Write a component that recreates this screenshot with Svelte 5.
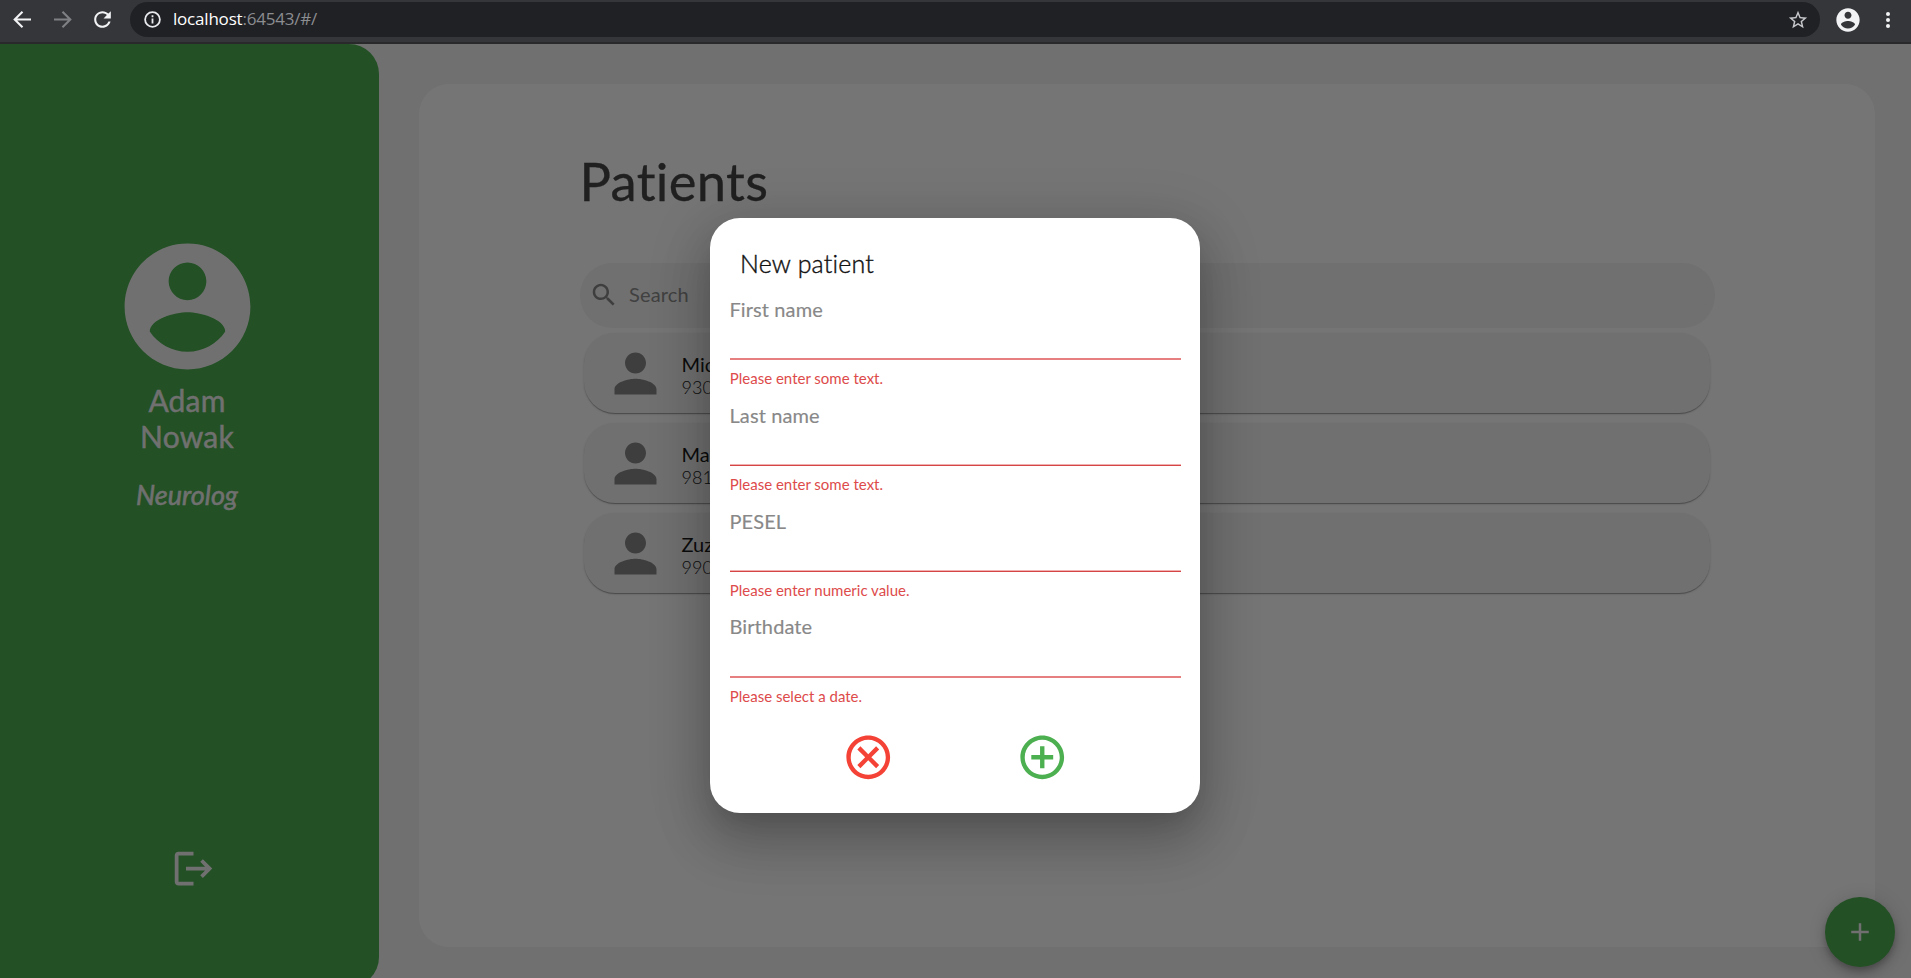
<script>
  const patients = [
    { name: 'Mic', id: '930' },
    { name: 'Ma', id: '981' },
    { name: 'Zuz', id: '990' },
  ];
  const fields = [
    { label: 'First name', error: 'Please enter some text.' },
    { label: 'Last name', error: 'Please enter some text.' },
    { label: 'PESEL', error: 'Please enter numeric value.' },
    { label: 'Birthdate', error: 'Please select a date.' },
  ];
  const account =
    'M12 2C6.48 2 2 6.48 2 12s4.48 10 10 10 10-4.48 10-10S17.52 2 12 2zm0 3c1.66 0 3 1.34 3 3s-1.34 3-3 3-3-1.34-3-3 1.34-3 3-3zm0 14.2c-2.5 0-4.71-1.28-6-3.22.03-1.99 4-3.08 6-3.08 1.99 0 5.97 1.09 6 3.08-1.29 1.94-3.5 3.22-6 3.22z';
</script>

{#snippet icon(d, size)}
  <svg class="icon" width={size} height={size} viewBox="0 0 24 24"><path {d} /></svg>
{/snippet}

<div class="window">
  <header class="toolbar">
    <nav class="nav">
      <svg width="25" height="25" viewBox="0 0 25 25"><path d="M21 12.5H5M12.5 4.7 4.7 12.5l7.8 7.8" /></svg>
      <svg class="off" width="25" height="25" viewBox="0 0 25 25"><path d="M4 12.5h16M12.5 4.7l7.8 7.8-7.8 7.8" /></svg>
      {@render icon('M17.65 6.35C16.2 4.9 14.21 4 12 4c-4.42 0-7.99 3.58-7.99 8s3.57 8 7.99 8c3.73 0 6.84-2.55 7.73-6h-2.08c-.82 2.33-3.04 4-5.65 4-3.31 0-6-2.69-6-6s2.69-6 6-6c1.66 0 3.14.69 4.22 1.78L13 11h7V4l-2.35 2.35z', 25)}
    </nav>
    <div class="omnibox">
      <svg class="info" width="17" height="17" viewBox="0 0 17 17">
        <circle cx="8.5" cy="8.5" r="7.4" /><path d="M8.5 7.6v4.9M8.5 4.3v2" />
      </svg>
      <span class="url"><span class="host">localhost</span>:64543/#/</span>
      <span class="star">
        {@render icon('M22 9.24l-7.19-.62L12 2 9.19 8.63 2 9.24l5.46 4.73L5.82 21 12 17.27 18.18 21l-1.63-7.03L22 9.24zM12 15.4l-3.76 2.27 1-4.28-3.32-2.88 4.38-.38L12 6.1l1.71 4.04 4.38.38-3.32 2.88 1 4.28L12 15.4z', 22)}
      </span>
    </div>
    <div class="user">{@render icon(account, 28)}</div>
    <div class="dots"><i></i><i></i><i></i></div>
  </header>

  <div class="page">
    <aside class="sidebar">
      <div class="avatar">{@render icon(account, 151)}</div>
      <div class="who">Adam<br />Nowak</div>
      <div class="role">Neurolog</div>
      <div class="logout">
        {@render icon('M17 7l-1.41 1.41L18.17 11H8v2h10.17l-2.58 2.58L17 17l5-5zM4 5h8V3H4c-1.1 0-2 .9-2 2v14c0 1.1.9 2 2 2h8v-2H4V5z', 45)}
      </div>
    </aside>
    <main class="card">
      <h1>Patients</h1>
      <div class="search">
        {@render icon('M15.5 14h-.79l-.28-.27C15.41 12.59 16 11.11 16 9.5 16 5.91 13.09 3 9.5 3S3 5.91 3 9.5 5.91 16 9.5 16c1.61 0 3.09-.59 4.23-1.57l.27.28v.79l5 4.99L20.49 19l-4.99-5zm-6 0C7.01 14 5 11.99 5 9.5S7.01 5 9.5 5 14 7.01 14 9.5 11.99 14 9.5 14z', 30)}
        <span>Search</span>
      </div>
      <ul>
        {#each patients as p}
          <li>
            {@render icon('M12 12c2.21 0 4-1.79 4-4s-1.79-4-4-4-4 1.79-4 4 1.79 4 4 4zm0 2c-2.67 0-8 1.34-8 4v2h16v-2c0-2.66-5.33-4-8-4z', 63)}
            <div class="info-text">
              <div class="name">{p.name}</div>
              <div class="id">{p.id}</div>
            </div>
          </li>
        {/each}
      </ul>
    </main>
    <button class="fab" aria-label="Add">{@render icon('M19 13h-6v6h-2v-6H5v-2h6V5h2v6h6v2z', 30)}</button>
    <div class="overlay">
      <section class="dialog">
        <h2>New patient</h2>
        {#each fields as f, i}
          <div class="field">
            <div class="label">{f.label}</div>
            <div class="rule" class:crisp={i === 1 || i === 2}></div>
            <div class="error">{f.error}</div>
          </div>
        {/each}
        <div class="actions">
          <span class="cancel">{@render icon('M15.59 7L12 10.59 8.41 7 7 8.41 10.59 12 7 15.59 8.41 17 12 13.41 15.59 17 17 15.59 13.41 12 17 8.41 15.59 7zM12 2C6.47 2 2 6.47 2 12s4.47 10 10 10 10-4.47 10-10S17.53 2 12 2zm0 18c-4.41 0-8-3.59-8-8s3.59-8 8-8 8 3.59 8 8-3.59 8-8 8z', 52.5)}</span>
          <span class="confirm">{@render icon('M13 7h-2v4H7v2h4v4h2v-4h4v-2h-4V7zm-1-5C6.48 2 2 6.48 2 12s4.48 10 10 10 10-4.48 10-10S17.52 2 12 2zm0 18c-4.41 0-8-3.59-8-8s3.59-8 8-8 8 3.59 8 8-3.59 8-8 8z', 52.5)}</span>
        </div>
      </section>
    </div>
  </div>
</div>

<style>
  :global(body) { margin: 0; overflow: hidden; }
  .window {
    width: 1911px; height: 978px; overflow: hidden;
    display: flex; flex-direction: column;
    font-family: Lato, sans-serif; line-height: 1.2;
    font-variant-ligatures: none;
  }
  .icon { display: block; flex: none; fill: currentColor; }
  .toolbar {
    box-sizing: border-box; height: 44px; flex: none;
    display: flex; align-items: flex-start;
    padding: 2px 17px 0 10px;
    background: #35363a; border-bottom: 2px solid #29292c;
    color: #f1f3f4;
  }
  .nav { display: flex; gap: 15px; margin: 5px 15px 0 0; }
  .nav svg:not(.icon) { fill: none; stroke: #f1f3f4; stroke-width: 2.1; }
  .nav svg.off { stroke: #7f8084 !important; }
  .omnibox {
    box-sizing: border-box; width: 1690px; height: 35px; border-radius: 18px;
    display: flex; align-items: center; padding: 0 11px 0 14px;
    background: #202124;
  }
  .info { fill: none; stroke: #e8eaed; stroke-width: 1.8; }
  .url {
    margin-left: 12px; flex: 1; position: relative; top: -1px;
    font: 17px/24px "Open Sans", sans-serif; letter-spacing: -.2px; color: #8b8d91;
  }
  .host { color: #fff; }
  .star { color: #c6c8cb; }
  .user { margin: 4px 0 0 13.5px; }
  .dots { display: flex; flex-direction: column; gap: 2px; margin: 9.5px 0 0 24px; }
  .dots i { width: 4px; height: 4px; border-radius: 2px; background: #f1f3f4; }

  .page {
    position: relative; flex: none; height: 943px;
    display: flex; background: #f3f3f3;
  }
  .sidebar {
    box-sizing: border-box; width: 379px; padding: 187px 5px 0 0;
    display: flex; flex-direction: column; align-items: center;
    background: #4caf50; border-radius: 0 30px 30px 0; color: #f5f5f5;
  }
  .who { font-size: 30px; line-height: 36px; text-align: center; letter-spacing: .2px; -webkit-text-stroke: .4px; }
  .role { margin-top: 24px; font-size: 27px; line-height: 33px; font-style: italic; -webkit-text-stroke: .5px; }
  .logout { margin: 335px 0 0 13px; }
  .card {
    box-sizing: border-box; width: 1456px; height: 863px; margin: 40px 0 0 40px;
    padding: 65px 160px 0 160.5px; background: #fff; border-radius: 30px;
  }
  h1 { margin: 0; font-weight: 400; font-size: 52.5px; line-height: 63px; letter-spacing: .35px; color: #464646; -webkit-text-stroke: .3px; }
  .search {
    box-sizing: border-box; height: 65px; margin-top: 51px; padding: 0 0 1px 9.5px;
    display: flex; align-items: center; gap: 10px;
    border-radius: 32px; background: #f4f4f4; color: #8e8e8e;
    font-size: 20px; letter-spacing: .15px;
  }
  .search span { margin-top: -2px; }
  .search :global(.icon) { fill: #888; }
  ul { list-style: none; margin: 5px 5px 0 4px; padding: 0; display: flex; flex-direction: column; gap: 10px; }
  li {
    box-sizing: border-box; height: 80px; padding-left: 20px;
    display: flex; align-items: center; gap: 15px; border-radius: 31px;
    background: #f4f4f4; color: #888;
    box-shadow: 0 2px 1px -1px rgba(0,0,0,.2), 0 1px 1px rgba(0,0,0,.14), 0 1px 3px rgba(0,0,0,.12);
  }
  .info-text { padding-top: 3px; }
  .name { font-size: 20px; line-height: 24px; color: #1c1c1c; }
  .id { font-size: 18px; line-height: 22px; font-weight: 300; color: #222; }
  .fab {
    position: absolute; left: 1825px; top: 853px; width: 70px; height: 70px;
    display: flex; align-items: center; justify-content: center; padding: 0;
    border: 0; border-radius: 50%; background: #4caf50; color: #f5f5f5;
    box-shadow: 0 4px 6px -1px rgba(0,0,0,.2), 0 7px 12px rgba(0,0,0,.14), 0 1px 22px rgba(0,0,0,.12);
  }
  .overlay {
    position: absolute; inset: 0; display: flex; align-items: center; justify-content: center;
    padding-right: 1px; background: rgba(0,0,0,.54);
  }
  .dialog {
    box-sizing: border-box; width: 490px; height: 595px; padding: 30px 19.5px 0 20px;
    background: #fff; border-radius: 30px;
    box-shadow: 0 14px 24px -9px rgba(0,0,0,.12), 0 30px 52px 4px rgba(0,0,0,.16), 0 11px 57px 10px rgba(0,0,0,.12);
  }
  h2 { margin: 0 0 19px 10px; font-weight: 300; font-size: 25px; line-height: 30px; color: #111; letter-spacing: .2px; -webkit-text-stroke: .4px #111; }
  .field { height: 105.8px; }
  .label { margin-left: -.5px; font-size: 20px; line-height: 24px; color: #888; letter-spacing: .1px; -webkit-text-stroke: .15px; }
  .rule { height: 2px; margin-top: 37.4px; background: #e68080; }
  .rule.crisp { background: linear-gradient(#f0b0b0 50%, #d64545 50%); }
  .error { margin: 9px 0 0 -.2px; font-size: 15px; line-height: 18px; color: #dd4b4b; }
  .actions { display: grid; grid-template-columns: 174px 174px; margin: 11px 0 0 51.3px; justify-items: center; }
  .cancel { color: #f44336; }
  .confirm { color: #4caf50; }
</style>
